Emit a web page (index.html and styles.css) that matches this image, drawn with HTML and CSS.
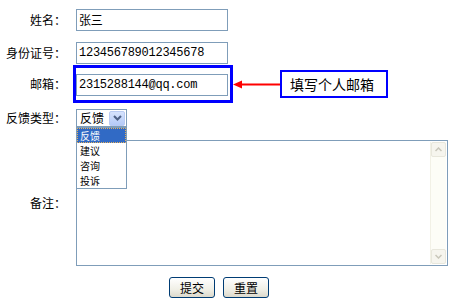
FILE: index.html
```html
<!DOCTYPE html>
<html lang="zh-CN">
<head>
    <meta charset="UTF-8">
    <title>反馈表单</title>
    <link rel="stylesheet" href="styles.css">
</head>
<body>
    <form class="form" onsubmit="return false;">
        <div class="row row-name">
            <label class="label">姓名：</label>
            <div class="field"><input class="text" type="text" value="张三"></div>
        </div>

        <div class="row row-id">
            <label class="label">身份证号：</label>
            <div class="field"><input class="text" type="text" value="123456789012345678"></div>
        </div>

        <!-- email row with annotation -->
        <div class="row row-email">
            <label class="label">邮箱：</label>
            <div class="field field-note">
                <div class="highlight">
                    <input class="text" type="text" value="2315288144@qq.com">
                </div>
                <svg class="arrow" width="47" height="9" viewBox="0 0 47 9">
                    <line x1="7" y1="4.5" x2="47" y2="4.5" stroke="#ff0000" stroke-width="2"/>
                    <polygon points="0,4.5 9,0.5 9,8.5" fill="#ff0000"/>
                </svg>
                <div class="callout">填写个人邮箱</div>
            </div>
        </div>

        <div class="row row-type">
            <label class="label">反馈类型：</label>
            <div class="field">
                <div class="select">
                    <span class="select-value">反馈</span>
                    <span class="select-btn">
                        <svg width="9" height="6" viewBox="0 0 9 6"><path d="M1 1 L4.5 4.5 L8 1" fill="none" stroke="#4d6185" stroke-width="2"/></svg>
                    </span>
                    <ul class="options">
                        <li class="option selected">反馈</li>
                        <li class="option">建议</li>
                        <li class="option">咨询</li>
                        <li class="option">投诉</li>
                    </ul>
                </div>
            </div>
        </div>

        <div class="row row-memo">
            <label class="label">备注：</label>
            <div class="field">
                <div class="memo">
                    <textarea class="memo-input"></textarea>
                    <div class="scrollbar">
                        <span class="scroll-btn">
                            <svg width="7" height="5" viewBox="0 0 7 5"><path d="M0.5 4 L3.5 1 L6.5 4" fill="none" stroke="#c9c7ba" stroke-width="1.5"/></svg>
                        </span>
                        <span class="scroll-btn">
                            <svg width="7" height="5" viewBox="0 0 7 5"><path d="M0.5 1 L3.5 4 L6.5 1" fill="none" stroke="#c9c7ba" stroke-width="1.5"/></svg>
                        </span>
                    </div>
                </div>
            </div>
        </div>

        <div class="row row-actions">
            <span></span>
            <div class="field actions">
                <button class="btn" type="submit">提交</button>
                <button class="btn" type="reset">重置</button>
            </div>
        </div>
    </form>
</body>
</html>
```

FILE: styles.css
```css
* {
    box-sizing: border-box;
    margin: 0;
    padding: 0;
}

body {
    background: #ffffff;
    font-family: "Noto Sans CJK SC", "Noto Sans", sans-serif;
    font-size: 12px;
    color: #000;
}

.form {
    padding-top: 9px;
}

.row {
    display: grid;
    grid-template-columns: 66px auto;
    column-gap: 7px;
    align-items: center;
}

.row-name { margin-bottom: 11px; }
.row-id { margin-bottom: 1px; }
.row-email { margin-bottom: 6px; }
.row-type { margin-bottom: 13px; }
.row-memo { margin-bottom: 11px; }

.label {
    text-align: right;
    white-space: nowrap;
    line-height: 14px;
}

.field {
    padding-left: 3px;
}

.text {
    display: block;
    width: 152px;
    height: 22px;
    border: 1px solid #7f9db9;
    padding: 0 2px;
    font-family: "Liberation Mono", "Noto Sans CJK SC", monospace;
    font-size: 12px;
    letter-spacing: -0.25px;
    color: #000;
    outline: none;
}

.field-note {
    display: flex;
    align-items: center;
    padding-left: 0;
}

.highlight {
    width: 160px;
    height: 38px;
    border: 3px solid #0000ff;
    padding: 6px 0 0 0;
}

.arrow {
    display: block;
}

.callout {
    width: 108px;
    height: 28px;
    border: 2px solid #0000ff;
    padding-left: 8px;
    font-size: 14px;
    line-height: 24px;
}

.select {
    position: relative;
    width: 51px;
    height: 18px;
    border: 1px solid #7f9db9;
    display: flex;
    align-items: center;
    justify-content: space-between;
    padding: 0 1px 0 3px;
    line-height: 16px;
}

.select-btn {
    width: 16px;
    height: 15px;
    border: 1px solid #b9cbf3;
    border-radius: 2px;
    background: linear-gradient(#d6e3fd, #b4caf7);
    display: flex;
    align-items: center;
    justify-content: center;
}

.options {
    position: absolute;
    top: 17px;
    left: -1px;
    width: 51px;
    list-style: none;
    background: #fff;
    border: 1px solid #7f9db9;
    z-index: 2;
}

.option {
    height: 15px;
    line-height: 15px;
    padding-left: 3px;
    font-size: 10px;
}

.option.selected {
    background: #316ac5;
    color: #fff;
    outline: 1px dotted #e6b15c;
    outline-offset: -1px;
}

.memo {
    display: flex;
    width: 372px;
    height: 126px;
    border: 1px solid #7f9db9;
}

.memo-input {
    flex: 1;
    border: none;
    resize: none;
    outline: none;
    font-family: inherit;
    font-size: 12px;
}

.scrollbar {
    width: 16px;
    margin: 1px 1px 1px 0;
    background: #fdfdf7;
    border-left: 1px solid #f2f1e6;
    display: flex;
    flex-direction: column;
    justify-content: space-between;
}

.scroll-btn {
    height: 15px;
    border: 1px solid #e8e7dc;
    border-radius: 2px;
    background: #f6f5ee;
    display: flex;
    align-items: center;
    justify-content: center;
}

.actions {
    display: flex;
    gap: 8px;
    padding-left: 96px;
}

.btn {
    width: 46px;
    height: 21px;
    border: 1px solid #003c74;
    border-radius: 3px;
    background: linear-gradient(#ffffff, #f0efe6 60%, #dcd9cc);
    font-family: inherit;
    font-size: 12px;
    color: #000;
    line-height: 18px;
}
```
